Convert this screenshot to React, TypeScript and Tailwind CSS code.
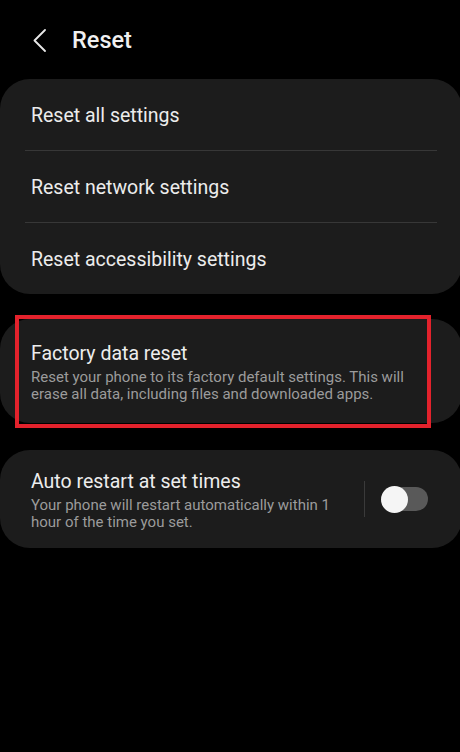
import React from "react";

const font = { fontFamily: "Roboto, 'Noto Sans', sans-serif" };

export default function App() {
  return (
    <div
      className="w-[460px] h-[752px] bg-black text-[#ececec] overflow-hidden"
      style={font}
    >
      {/* Header */}
      <div className="h-[79px] flex items-start pt-[25px]">
        <div className="w-[72px] flex pl-[32px] pt-[3px]">
          <svg width="16" height="24" viewBox="0 0 16 24" fill="none">
            <path
              d="M13 2 L2.5 12.5 L13 23"
              stroke="#e8e8e8"
              strokeWidth="1.8"
              strokeLinecap="round"
              strokeLinejoin="round"
            />
          </svg>
        </div>
        <div className="text-[23.5px] font-medium leading-[30px] text-[#f0f0f0]">
          Reset
        </div>
      </div>

      {/* Card 1 */}
      <div className="bg-[#1c1c1c] rounded-[30px] mr-[-2px]">
        <div className="h-[71px] flex items-center pl-[31px] pt-[3px] text-[19.5px]">
          Reset all settings
        </div>
        <div className="mx-[25px] h-px bg-[#373737]" />
        <div className="h-[71px] flex items-center pl-[31px] pt-[2px] text-[19.5px]">
          Reset network settings
        </div>
        <div className="mx-[25px] h-px bg-[#373737]" />
        <div className="h-[71px] flex items-center pl-[31px] pt-[2px] text-[19.5px]">
          Reset accessibility settings
        </div>
      </div>

      {/* Card 2 */}
      <div className="relative mt-[25px]">
        <div className="bg-[#1c1c1c] rounded-[30px] mr-[-2px] h-[104px] flex flex-col justify-center pl-[31px] pr-[40px] pt-[2px]">
          <div className="text-[19.5px] leading-[24px] text-[#ededed]">
            Factory data reset
          </div>
          <div className="text-[15px] leading-[17px] text-[#9b9b9b] mt-[3px]">
            Reset your phone to its factory default settings. This will erase
            all data, including files and downloaded apps.
          </div>
        </div>
        <div className="absolute left-[15px] top-[-4px] w-[416px] h-[113px] border-[4px] border-[#e3222c]" />
      </div>

      {/* Card 3 */}
      <div className="mt-[27px] bg-[#1c1c1c] rounded-[30px] mr-[-2px] h-[98px] flex items-center pl-[31px] pr-[34px]">
        <div className="flex-1 pt-[3px]">
          <div className="text-[19.5px] leading-[24px] text-[#ededed]">
            Auto restart at set times
          </div>
          <div className="text-[15px] leading-[17px] text-[#9b9b9b] mt-[3px] w-[315px]">
            Your phone will restart automatically within 1 hour of the time you
            set.
          </div>
        </div>
        <div className="w-px h-[36px] bg-[#3a3a3a] mr-[16px]" />
        <div className="relative w-[47px] h-[27px] flex items-center">
          <div className="absolute left-[4px] right-0 h-[24px] rounded-full bg-[#595959]" />
          <div className="absolute left-0 w-[27px] h-[27px] rounded-full bg-[#f5f5f5]" />
        </div>
      </div>
    </div>
  );
}
